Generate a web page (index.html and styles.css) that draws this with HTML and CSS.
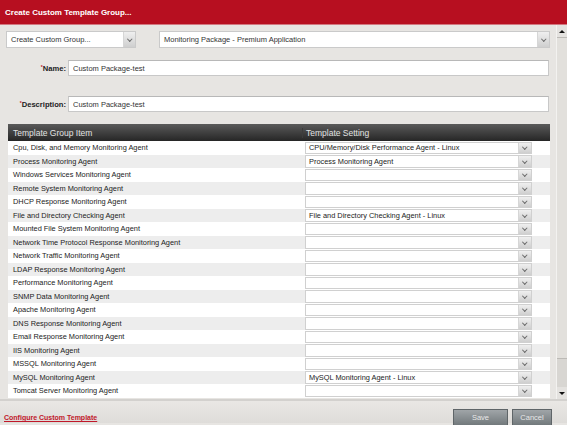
FILE: index.html
```html
<!DOCTYPE html>
<html lang="en">
<head>
  <meta charset="UTF-8">
  <title>Create Custom Template Group</title>
  <link rel="stylesheet" href="styles.css">
</head>
<body>
  <div class="titlebar">Create Custom Template Group...</div>
  <div class="main">
    <div class="content">
      <div class="pickers">
        <div class="select group-select"><span>Create Custom Group...</span><i class="arrow"></i></div>
        <div class="select package-select"><span>Monitoring Package - Premium Application</span><i class="arrow"></i></div>
      </div>
      <div class="field">
        <label><sup>*</sup>Name:</label>
        <input type="text" value="Custom Package-test">
      </div>
      <div class="field desc">
        <label><sup>*</sup>Description:</label>
        <input type="text" value="Custom Package-test">
      </div>
      <div class="items">
        <div class="items-head">
          <div>Template Group Item</div>
          <div>Template Setting</div>
        </div>
        <div class="items-body">
          <div class="row"><div>Cpu, Disk, and Memory Monitoring Agent</div><div class="select"><span>CPU/Memory/Disk Performance Agent - Linux</span><i class="arrow"></i></div></div>
          <div class="row"><div>Process Monitoring Agent</div><div class="select"><span>Process Monitoring Agent</span><i class="arrow"></i></div></div>
          <div class="row"><div>Windows Services Monitoring Agent</div><div class="select"><span></span><i class="arrow"></i></div></div>
          <div class="row"><div>Remote System Monitoring Agent</div><div class="select"><span></span><i class="arrow"></i></div></div>
          <div class="row"><div>DHCP Response Monitoring Agent</div><div class="select"><span></span><i class="arrow"></i></div></div>
          <div class="row"><div>File and Directory Checking Agent</div><div class="select"><span>File and Directory Checking Agent - Linux</span><i class="arrow"></i></div></div>
          <div class="row"><div>Mounted File System Monitoring Agent</div><div class="select"><span></span><i class="arrow"></i></div></div>
          <div class="row"><div>Network Time Protocol Response Monitoring Agent</div><div class="select"><span></span><i class="arrow"></i></div></div>
          <div class="row"><div>Network Traffic Monitoring Agent</div><div class="select"><span></span><i class="arrow"></i></div></div>
          <div class="row"><div>LDAP Response Monitoring Agent</div><div class="select"><span></span><i class="arrow"></i></div></div>
          <div class="row"><div>Performance Monitoring Agent</div><div class="select"><span></span><i class="arrow"></i></div></div>
          <div class="row"><div>SNMP Data Monitoring Agent</div><div class="select"><span></span><i class="arrow"></i></div></div>
          <div class="row"><div>Apache Monitoring Agent</div><div class="select"><span></span><i class="arrow"></i></div></div>
          <div class="row"><div>DNS Response Monitoring Agent</div><div class="select"><span></span><i class="arrow"></i></div></div>
          <div class="row"><div>Email Response Monitoring Agent</div><div class="select"><span></span><i class="arrow"></i></div></div>
          <div class="row"><div>IIS Monitoring Agent</div><div class="select"><span></span><i class="arrow"></i></div></div>
          <div class="row"><div>MSSQL Monitoring Agent</div><div class="select"><span></span><i class="arrow"></i></div></div>
          <div class="row"><div>MySQL Monitoring Agent</div><div class="select"><span>MySQL Monitoring Agent - Linux</span><i class="arrow"></i></div></div>
          <div class="row"><div>Tomcat Server Monitoring Agent</div><div class="select"><span></span><i class="arrow"></i></div></div>
        </div>
      </div>
    </div>
    <div class="scrollbar">
      <div class="sb-btn up"></div>
      <div class="sb-thumb"></div>
      <div class="sb-track"></div>
      <div class="sb-btn down"></div>
    </div>
  </div>
  <div class="footer">
    <a class="config-link" href="#">Configure Custom Template</a>
    <button class="btn save">Save</button>
    <button class="btn cancel">Cancel</button>
  </div>
</body>
</html>
```
FILE: styles.css
```css
body {
  margin: 0;
  width: 567px;
  height: 425px;
  overflow: hidden;
  font-family: "Liberation Sans", Arial, sans-serif;
  background-color: #e7e5e2;
}
.titlebar {
  height: 24px;
  line-height: 26px;
  padding-left: 5px;
  background-color: #b70f20;
  border-bottom: 1px solid #d27880;
  color: #fff;
  font-size: 8px;
  font-weight: bold;
}
.main {
  display: flex;
  height: 374px;
}
.content {
  width: 553px;
  padding-top: 6px;
  box-sizing: border-box;
}
.pickers {
  display: flex;
  padding-left: 6px;
}
.select {
  display: flex;
  align-items: center;
  height: 17px;
  box-sizing: border-box;
  padding-left: 4px;
  background-color: #fff;
  border: 1px solid #cacaca;
  font-size: 7.5px;
  color: #333;
}
.select span {
  flex: 1;
  white-space: nowrap;
}
.group-select {
  width: 130px;
}
.package-select {
  width: 391px;
  margin-left: 23px;
}
.arrow {
  display: flex;
  align-items: center;
  justify-content: center;
  width: 11px;
  align-self: stretch;
  background: linear-gradient(#efefef, #cfcfcf);
  border-left: 1px solid #d6d6d6;
}
.arrow::before {
  content: "";
  width: 2.5px;
  height: 2.5px;
  margin-top: -2px;
  border-right: 1.2px solid #6a6a6a;
  border-bottom: 1.2px solid #6a6a6a;
  transform: rotate(45deg);
}
.field {
  display: flex;
  align-items: center;
  margin-top: 12px;
}
.field.desc {
  margin-top: 20px;
}
.field label {
  width: 66px;
  margin-right: 2px;
  text-align: right;
  font-size: 7.6px;
  font-weight: bold;
  color: #222;
}
.field sup {
  color: #c0182a;
  font-size: 5px;
  vertical-align: top;
}
.field input {
  width: 481px;
  height: 16px;
  box-sizing: border-box;
  margin: 0;
  padding: 0 0 0 4px;
  border: 1px solid #c8c8c8;
  border-top-color: #b8b8b8;
  font-family: "Liberation Sans", Arial, sans-serif;
  font-size: 7.5px;
  color: #333;
}
.items {
  width: 542px;
  margin: 12px 0 0 8px;
}
.items-head {
  display: grid;
  grid-template-columns: 294px 248px;
  align-items: center;
  height: 17px;
  background: linear-gradient(#5a5a5a, #262626);
  color: #e2e2e2;
  font-size: 8.5px;
}
.items-head div:first-child {
  padding-left: 5px;
}
.items-head div:last-child {
  padding-left: 3px;
  border-left: 1px solid #3c3c3c;
}
.row {
  display: grid;
  grid-template-columns: 294px 248px;
  align-items: center;
  height: 13.5px;
  background-color: #fff;
  font-size: 7.4px;
  color: #222;
}
.row:nth-child(even) {
  background-color: #ededed;
}
.row > div:first-child {
  padding-left: 5px;
  white-space: nowrap;
}
.row .select {
  width: 227px;
  height: 12.5px;
  margin-left: 3px;
  padding-left: 3px;
  font-size: 7.4px;
  color: #222;
  border-color: #d0d0d0;
}
.row .arrow {
  width: 12px;
}
.scrollbar {
  display: flex;
  flex-direction: column;
  width: 11px;
  margin-left: 3px;
  background-color: #d8d6d2;
  border-left: 1px solid #f3f2f0;
  box-sizing: border-box;
}
.sb-btn {
  display: flex;
  align-items: center;
  justify-content: center;
  height: 12px;
  background-color: #e4e2df;
}
.sb-btn::before {
  content: "";
  border-left: 3px solid transparent;
  border-right: 3px solid transparent;
}
.sb-btn.up::before {
  border-bottom: 3px solid #111;
}
.sb-btn.down::before {
  border-top: 3px solid #111;
}
.sb-thumb {
  height: 322px;
  box-sizing: border-box;
  background-color: #e2e0dc;
  border-top: 1px solid #bcbab6;
  border-bottom: 1px solid #bcbab6;
}
.sb-track {
  flex: 1;
}
.footer {
  display: flex;
  align-items: flex-start;
  height: 24px;
  padding: 8px 15px 0 4px;
  box-sizing: border-box;
  border-top: 2px solid #d3d1ce;
  background: linear-gradient(#e9e7e4, #dedcd9);
}
.config-link {
  line-height: 17px;
  font-size: 7px;
  font-weight: bold;
  color: #c0182a;
}
.btn {
  height: 17px;
  padding: 0;
  border: 1px solid #5f6568;
  background: linear-gradient(#a0a5a8, #72797c);
  color: #e8e8e8;
  font-family: "Liberation Sans", Arial, sans-serif;
  font-size: 7.5px;
}
.btn.save {
  width: 55px;
  margin-left: auto;
  margin-right: 4px;
}
.btn.cancel {
  width: 40px;
}
```
